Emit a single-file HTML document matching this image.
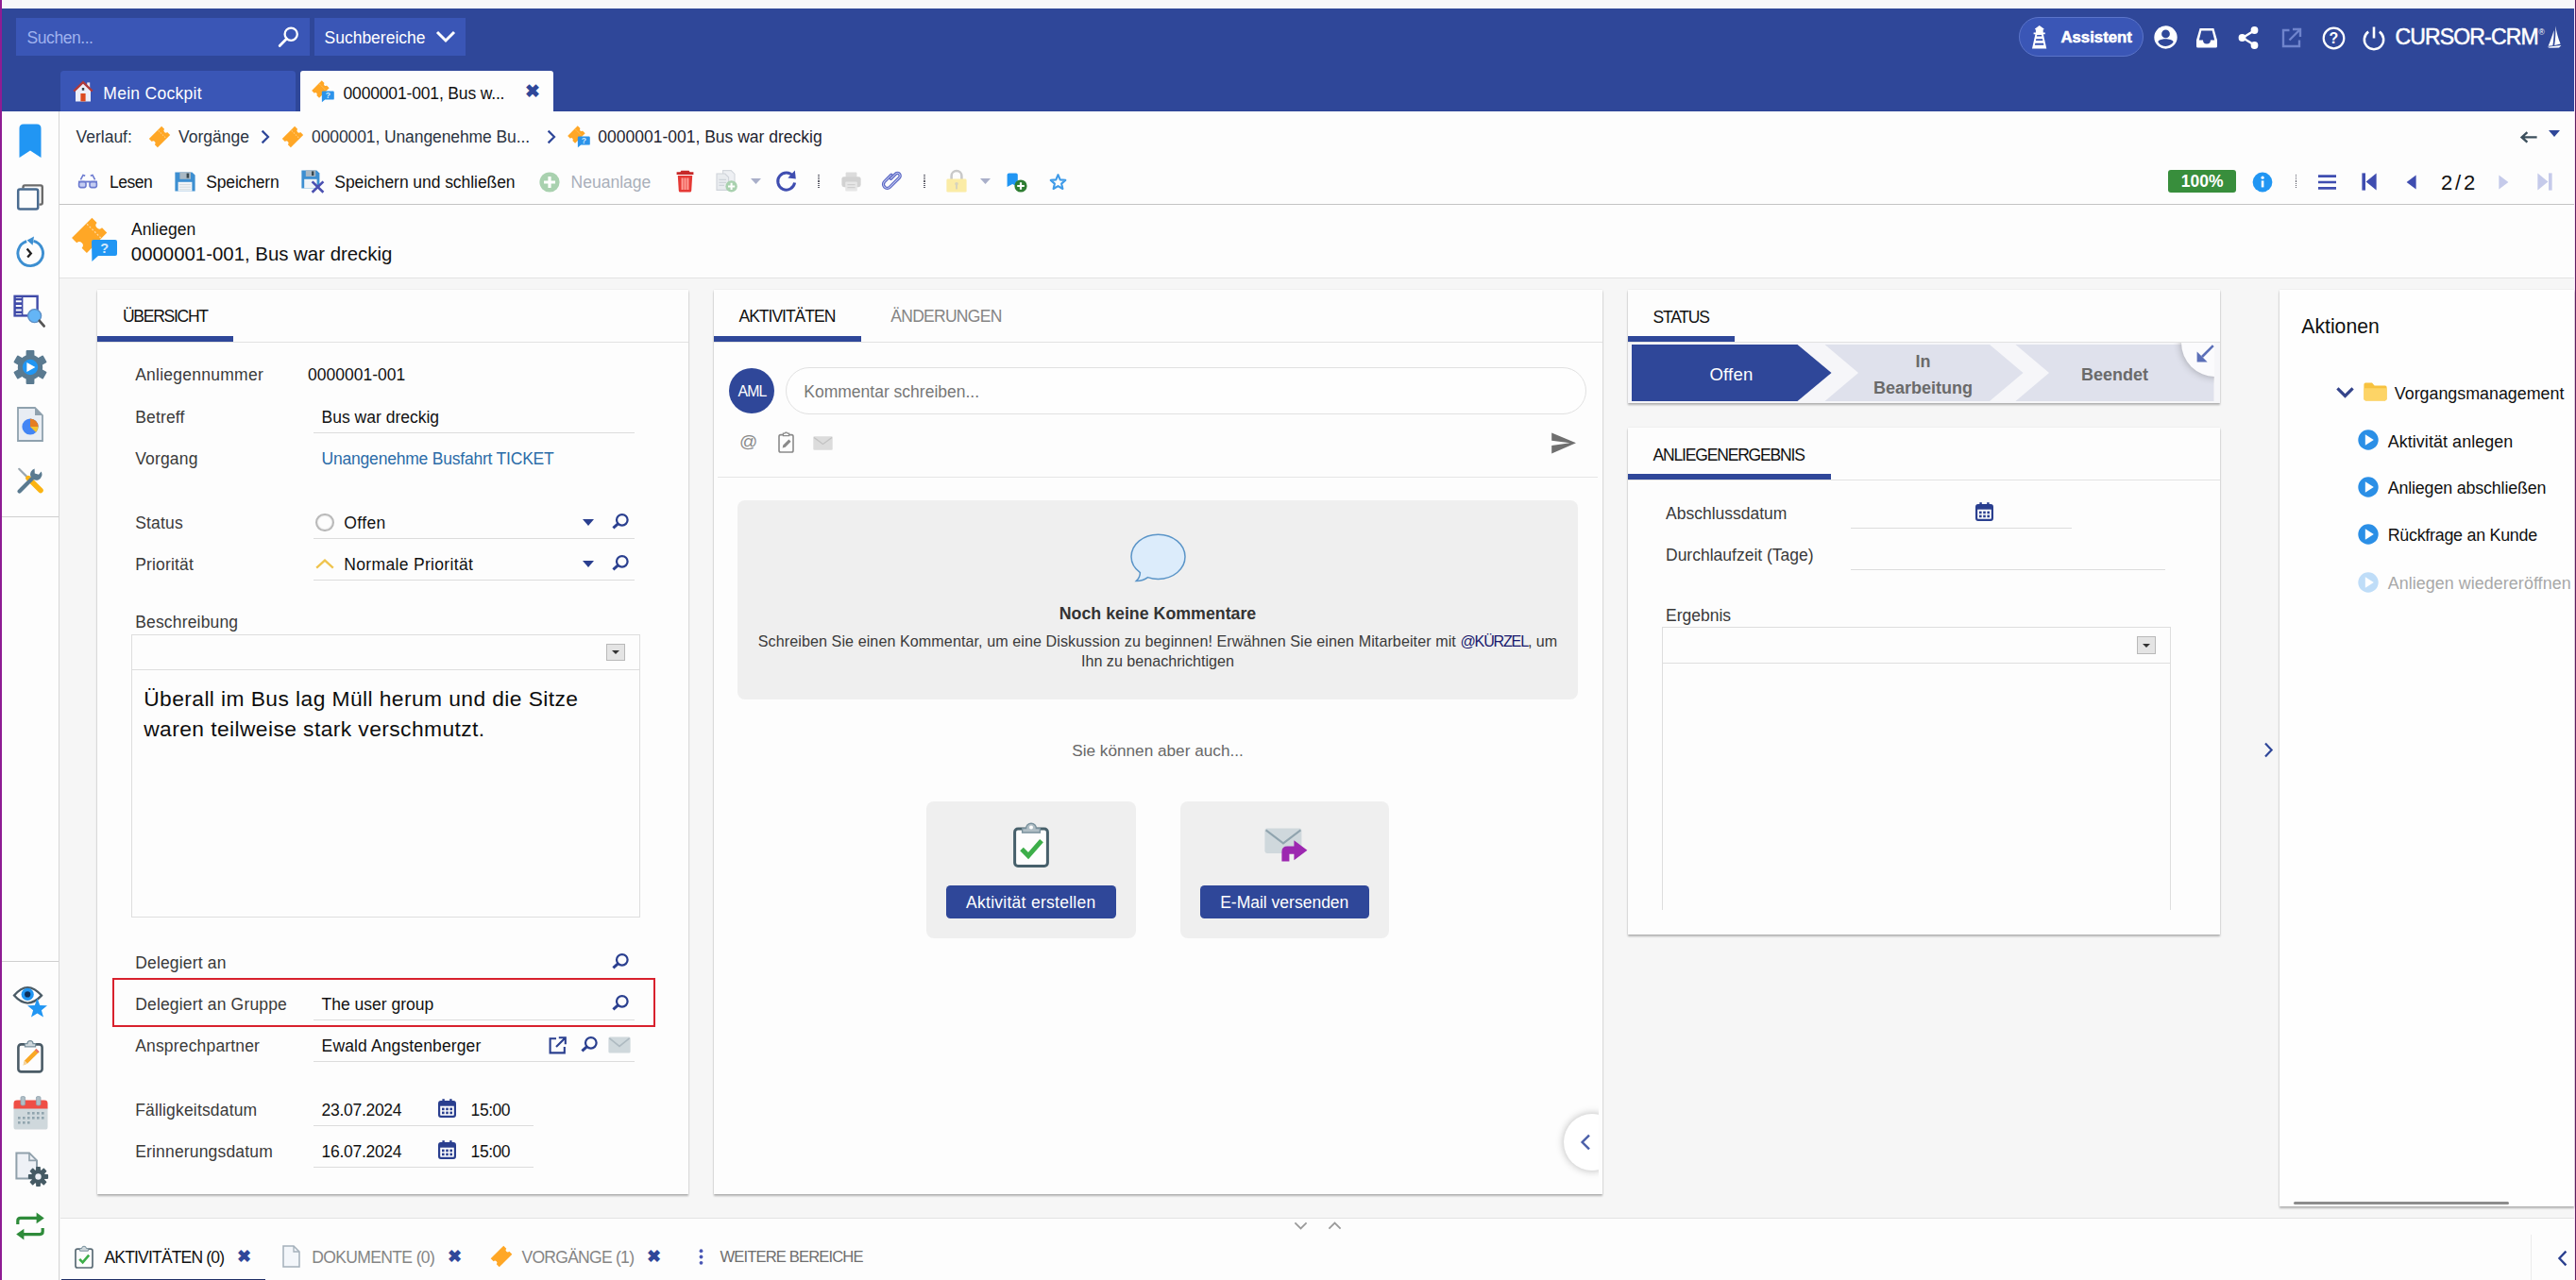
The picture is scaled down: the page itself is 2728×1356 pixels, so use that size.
<!DOCTYPE html>
<html lang="de">
<head>
<meta charset="utf-8">
<title>CURSOR-CRM – Anliegen 0000001-001</title>
<style>
*{box-sizing:border-box;margin:0;padding:0}
html,body{width:2728px;height:1356px;overflow:hidden}
body{position:relative;background:#f6f6f6;font-family:"Liberation Sans",sans-serif;font-size:17.5px;color:#1c1c1c}
.a{position:absolute}
.t{position:absolute;white-space:nowrap;line-height:20px;height:20px}
.lbl{color:#3a3a3a}
.val{color:#111}
.cap{font-size:16.5px}
.ul{position:absolute;height:1px;background:#dcdcdc}
.panel{position:absolute;background:#fdfdfd;box-shadow:0 1.5px 2px rgba(0,0,0,.27),0 0 1.2px rgba(0,0,0,.13)}
.tabline{position:absolute;height:1px;background:#e2e2e2}
.tabul{position:absolute;height:6px;background:#2f4799}
svg{position:absolute;overflow:visible}
.hd{background:#2f4799}
</style>
</head>
<body>
<!-- window chrome edges -->
<div class="a" style="left:0;top:0;width:2728px;height:9px;background:#f7f7f9"></div>

<!-- ================= HEADER ================= -->
<div class="a hd" id="header" style="left:0;top:9px;width:2725.8px;height:109px"></div>
<div class="a" style="left:17px;top:19px;width:311px;height:40px;background:#3a56b6"></div>
<div class="t" style="left:28.6px;top:30.3px;color:#9fb2ee;letter-spacing:-.45px">Suchen...</div>
<svg style="left:294px;top:27px" width="24" height="24" viewBox="0 0 24 24"><circle cx="14.2" cy="9.2" r="6.6" fill="none" stroke="#fff" stroke-width="2.3"/><path d="M9.6 14 L2.2 21.6" stroke="#fff" stroke-width="2.8" stroke-linecap="round"/></svg>
<div class="a" style="left:333px;top:19px;width:160px;height:40px;background:#3a56b6"></div>
<div class="t" style="left:343.5px;top:30px;color:#fff">Suchbereiche</div>
<svg style="left:461px;top:32px" width="22" height="14" viewBox="0 0 22 14"><path d="M2 2 L11 11 L20 2" fill="none" stroke="#fff" stroke-width="3"/></svg>

<!-- main tabs -->
<div class="a" style="left:64px;top:75.3px;width:249px;height:42.7px;background:#3a56b6;border-radius:3.5px 3.5px 0 0"></div>
<div class="t" style="left:109.3px;top:88.8px;color:#fff;letter-spacing:.29px">Mein Cockpit</div>
<div class="a" style="left:318px;top:74.5px;width:267.7px;height:44px;background:#fdfdfd;border-radius:3px 3px 0 0"></div>
<div class="t val" style="left:363.5px;top:88.8px;letter-spacing:-.16px">0000001-001, Bus w...</div>
<div class="t" style="left:555.5px;top:87.2px;color:#2f4799;font-weight:700;font-size:19px">✖</div>
<!-- home icon -->
<svg style="left:77px;top:84.5px" width="22" height="23" viewBox="0 0 22 23"><rect x="15.2" y="2.4" width="3" height="5.6" fill="#e9e4ee"/><path d="M3 10.4 L11 2.8 L19 10.4 V22.4 H3 Z" fill="#eceef8"/><path d="M1.2 11.6 L11 2.2 L20.8 11.6" fill="none" stroke="#b03a3a" stroke-width="2.3" stroke-linejoin="miter"/><rect x="8.4" y="14" width="5.2" height="8.4" fill="#dc4a1f"/><rect x="9.8" y="8" width="2.4" height="2.8" fill="#37474f"/></svg>
<!-- ticket+question icon (tab) -->
<svg style="left:330.3px;top:83.6px" width="26" height="26" viewBox="0 0 26 26"><g transform="rotate(-45 9.4 10.6)"><path d="M1.9 5 H16.9 V8.9 A1.7 1.7 0 0 0 16.9 12.3 V16.2 H1.9 V12.3 A1.7 1.7 0 0 0 1.9 8.9 Z" fill="#ffa726"/><path d="M12.6 5.6 V15.6" stroke="#ffc976" stroke-width=".9" stroke-dasharray="1.4 1.2"/></g><path d="M12 12.6 H22.6 Q23.8 12.6 23.8 13.8 V20.4 Q23.8 21.6 22.6 21.6 H14.2 L10.9 24.2 L10.8 13.8 Q10.8 12.6 12 12.6 Z" fill="#2b93ea"/><text x="17.4" y="20.2" font-size="8.6" font-weight="700" fill="#cfe8fd" text-anchor="middle" font-family="Liberation Sans, sans-serif">?</text></svg>

<!-- header right -->
<div class="a" style="left:2138px;top:17.5px;width:132px;height:42.5px;border-radius:22px;background:#3a56b6;border:1px solid #5b74c9"></div>
<svg style="left:2152.2px;top:26.6px" width="16" height="25" viewBox="0 0 16 25"><path d="M7.7 0 L12.6 3.6 V4.2 H11.7 V7.5 H13.8 V9.3 H11.9 L15.3 24.4 H0 L3.4 9.3 H1.6 V7.5 H3.9 V4.2 H3 V3.6 Z" fill="#fff"/><path d="M5.3 9.9 H10 L10.4 11.6 H4.9 Z M4.3 14.3 H11 L11.4 16.1 H3.9 Z M3.3 18.8 H12 L12.4 20.7 H2.9 Z" fill="#3853b2"/></svg>
<div class="t" style="left:2182.4px;top:30.2px;color:#fff;font-weight:700;font-size:16.8px;-webkit-text-stroke:.55px #fff">Assistent</div>
<!-- user -->
<svg style="left:2280.5px;top:27px" width="25" height="25" viewBox="0 0 24 24"><path d="M12 0.3 A11.7 11.7 0 1 0 12 23.7 A11.7 11.7 0 1 0 12 0.3 Z M12 4.4 A4.2 4.2 0 1 1 12 12.8 A4.2 4.2 0 1 1 12 4.4 Z M12 21 C8.6 21 5.7 19.3 4.2 16.9 C4.3 14.4 9.4 13.6 12 13.6 C14.6 13.6 19.7 14.4 19.8 16.9 C18.3 19.3 15.4 21 12 21 Z" fill="#fff" fill-rule="evenodd"/></svg>
<!-- inbox -->
<svg style="left:2325px;top:29px" width="24" height="22" viewBox="0 0 24 22"><path d="M4.6 1 H19.4 L23 13.5 V20 A1.6 1.6 0 0 1 21.4 21.6 H2.6 A1.6 1.6 0 0 1 1 20 V13.5 Z M6.3 3.4 L3.8 13.4 H8 A4 4 0 0 0 16 13.4 H20.2 L17.7 3.4 Z" fill="#fff" fill-rule="evenodd"/></svg>
<!-- share -->
<svg style="left:2369px;top:27px" width="24" height="26" viewBox="0 0 24 26"><path d="M6 13 L18 5.5 M6 13 L18 20.5" stroke="#fff" stroke-width="2.4"/><circle cx="5.5" cy="13" r="3.9" fill="#fff"/><circle cx="18.5" cy="5" r="3.9" fill="#fff"/><circle cx="18.5" cy="21" r="3.9" fill="#fff"/></svg>
<!-- external dim -->
<svg style="left:2415px;top:28.5px" width="23" height="23" viewBox="0 0 23 23"><path d="M9.5 3 H3 V20 H20 V13.5" fill="none" stroke="#6f84cc" stroke-width="2.4"/><path d="M13 2 H21 V10 M21 2 L9.5 13.5" fill="none" stroke="#6f84cc" stroke-width="2.4"/></svg>
<!-- help -->
<svg style="left:2458.5px;top:27.5px" width="25" height="25" viewBox="0 0 25 25"><circle cx="12.5" cy="12.5" r="10.8" fill="none" stroke="#fff" stroke-width="2.2"/><text x="12.5" y="18.2" font-size="16" font-weight="700" fill="#fff" text-anchor="middle" font-family="Liberation Sans, sans-serif">?</text></svg>
<!-- power -->
<svg style="left:2501px;top:26.5px" width="26" height="27" viewBox="0 0 26 27"><path d="M7.2 6.6 A10.2 10.2 0 1 0 18.8 6.6" fill="none" stroke="#fff" stroke-width="2.5"/><path d="M13 1.5 V13.5" stroke="#fff" stroke-width="2.6"/></svg>
<div class="t" style="left:2536.5px;top:29.4px;color:#fff;font-size:23px;letter-spacing:-0.85px;-webkit-text-stroke:0.5px #fff">CURSOR-CRM</div>
<div class="t" style="left:2688.6px;top:23.6px;color:#fff;font-size:8.5px">®</div>
<svg style="left:2697px;top:27px" width="16" height="24" viewBox="0 0 16 24"><path d="M9.2 0.5 C10.5 7 12.2 14 14.6 19.6 L8.2 21 C9.3 14 9.6 7 9.2 0.5 Z M7.6 5 C7.8 10 7.2 16 6.4 21.2 L1.6 21.8 C4 16 6.2 10 7.6 5 Z M0.6 22.8 L15.4 21 L13 23.4 L3 23.8 Z" fill="#fff"/></svg>

<!-- ================= SIDEBAR ================= -->
<div class="a" style="left:0;top:118px;width:63px;height:1238px;background:#fdfdfd;border-right:1px solid #d6d6d6"></div>
<div class="a" style="left:0;top:547px;width:62px;height:1px;background:#cfcfcf"></div>
<div class="a" style="left:0;top:1018px;width:62px;height:1px;background:#cfcfcf"></div>
<!-- content white bg top (breadcrumb/toolbar/title) -->
<div class="a" style="left:63px;top:118px;width:2663px;height:176px;background:#fdfdfd"></div>
<div class="a" style="left:63px;top:216px;width:2663px;height:1px;background:#c4c4c4"></div>
<div class="a" style="left:63px;top:294px;width:2663px;height:1px;background:#e3e3e3"></div>
<!-- window left/right edge -->
<div class="a" style="left:0;top:0;width:2px;height:1356px;background:#8e1c93"></div>
<div class="a" style="left:2725.8px;top:0;width:1.3px;height:1356px;background:#fbe6f6"></div>
<div class="a" style="left:2727px;top:0;width:1px;height:1356px;background:#5e2160"></div>
<!-- sidebar icons -->
<svg style="left:20px;top:130.5px" width="24" height="37" viewBox="0 0 24 37"><path d="M0.5 5 Q0.5 0.5 5 0.5 H19 Q23.5 0.5 23.5 5 V36 L12 28.5 L0.5 36 Z" fill="#2196f3"/></svg>
<svg style="left:17px;top:195px" width="30" height="28" viewBox="0 0 30 28"><path d="M7.5 4.5 V3.2 Q7.5 1.4 9.3 1.4 H26 Q27.8 1.4 27.8 3.2 V19.8 Q27.8 21.6 26 21.6 H24.5" fill="none" stroke="#6b6b6b" stroke-width="2.4"/><rect x="2.2" y="5.6" width="21" height="21" rx="2" fill="none" stroke="#4a6b8f" stroke-width="2.5"/></svg>
<svg style="left:15px;top:250px" width="34" height="36" viewBox="0 0 34 36"><path d="M13.2 5.6 A13.3 13.3 0 1 0 20.5 5.4" fill="none" stroke="#3d8fd1" stroke-width="2.9"/><path d="M21 0.6 L13.6 4.6 L19.6 9.8 Z" fill="#3d8fd1"/><path d="M13.6 13.6 L17.8 18.4 L14.2 22.6" fill="none" stroke="#222" stroke-width="2.3"/></svg>
<svg style="left:14px;top:312px" width="34" height="36" viewBox="0 0 34 36"><rect x="1.6" y="1.8" width="24" height="20.6" fill="#fdfdfd" stroke="#3f4aa8" stroke-width="2.4"/><path d="M1.6 5 H9.4 M1.6 9.6 H9.4 M1.6 14.2 H9.4 M1.6 18.8 H9.4" stroke="#3f4aa8" stroke-width="2.6"/><path d="M9.6 2 V22" stroke="#3f4aa8" stroke-width="1.6"/><circle cx="22.6" cy="22.6" r="7" fill="#64b5f6" stroke="#5c8fc6" stroke-width="1.4"/><path d="M27.8 27.8 L32.6 33.4" stroke="#555" stroke-width="2.8" stroke-linecap="round"/></svg>
<svg style="left:14px;top:371px" width="36" height="36" viewBox="-18 -18 36 36"><g fill="#5a7a90"><circle r="13.2"/><g id="gt"><rect x="-4.4" y="-18" width="8.8" height="9" rx="1"/></g><use href="#gt" transform="rotate(60)"/><use href="#gt" transform="rotate(120)"/><use href="#gt" transform="rotate(180)"/><use href="#gt" transform="rotate(240)"/><use href="#gt" transform="rotate(300)"/></g><circle r="8.2" fill="#2196f3"/><path d="M-3.6 -5 L5.4 0 L-3.6 5 Z" fill="#fff"/></svg>
<svg style="left:18px;top:430.5px" width="28" height="37" viewBox="0 0 28 37"><path d="M1 1 H19 L27 9 V36 H1 Z" fill="#e8edf3" stroke="#8fa1ae" stroke-width="1.8"/><path d="M19 1 V9 H27 Z" fill="#8fa1ae"/><circle cx="14" cy="21" r="8.6" fill="#4285f4"/><path d="M14 21 V12.4 A8.6 8.6 0 0 1 22.6 21 Z" fill="#e67e22"/><path d="M14 21 H22.6 A8.6 8.6 0 0 1 20.1 27.1 Z" fill="#f4c430"/></svg>
<svg style="left:18px;top:495px" width="28" height="28" viewBox="0 0 28 28"><path d="M2.2 1.8 L13 12.6" stroke="#9aa7b0" stroke-width="2.2" stroke-linecap="round"/><path d="M12 11.6 L25 24.6" stroke="#fbb413" stroke-width="5.6" stroke-linecap="round"/><path d="M2.6 25.4 L15.5 12.5" stroke="#5a7a90" stroke-width="4.2" stroke-linecap="round"/><path d="M25.6 4.4 A6.2 6.2 0 1 1 18.6 1.6 L18.8 6.6 L23 7.8 Z" fill="#5a7a90"/></svg>
<!-- lower sidebar icons -->
<svg style="left:13.5px;top:1041.5px" width="37" height="36" viewBox="0 0 37 36"><path d="M1 12.6 Q15 -4.5 30 12.6 Q15 28.5 1 12.6 Z" fill="#fff" stroke="#4a5b66" stroke-width="2.3"/><circle cx="15.2" cy="11.4" r="6.6" fill="#2196f3"/><circle cx="15.2" cy="11.4" r="3.1" fill="#0d2f5a"/><path d="M25.5 15.6 L28.2 23 L36 23.3 L29.9 28.2 L32 35.6 L25.5 31.4 L19 35.6 L21.1 28.2 L15 23.3 L22.8 23 Z" fill="#2196f3"/></svg>
<svg style="left:18px;top:1100.5px" width="28" height="36" viewBox="0 0 28 36"><rect x="1.4" y="5.4" width="25.2" height="29" rx="3" fill="#fdfdfd" stroke="#4a5b66" stroke-width="2.6"/><path d="M8.4 7.8 V4.6 H11 A3 3 0 0 1 17 4.6 H19.6 V7.8 Z" fill="#cfd8dc" stroke="#78909c" stroke-width="1.2"/><path d="M6.6 27.4 L8 22.4 L20.4 10 L23.6 13.2 L11.2 25.6 Z" fill="#f9a825"/><path d="M6.6 27.4 L8 22.4 L11.2 25.6 Z" fill="#f3d6a4"/><path d="M19 11.4 L20.4 10 L23.6 13.2 L22.2 14.6 Z" fill="#e57373"/></svg>
<svg style="left:13.5px;top:1160.5px" width="37" height="36" viewBox="0 0 37 36"><rect x="0.5" y="11" width="36" height="24.5" rx="2.6" fill="#cfd8dc"/><path d="M0.5 13.4 V8 Q0.5 4.6 4 4.6 H33 Q36.5 4.6 36.5 8 V13.4 Z" fill="#ef4e45"/><rect x="8" y="0.6" width="4.6" height="9.4" rx="1.4" fill="#b0bec5" stroke="#8fa1ae" stroke-width=".8"/><rect x="24.4" y="0.6" width="4.6" height="9.4" rx="1.4" fill="#b0bec5" stroke="#8fa1ae" stroke-width=".8"/><g fill="#90a4ae"><rect x="15" y="17" width="2.6" height="2.6"/><rect x="20" y="17" width="2.6" height="2.6"/><rect x="25" y="17" width="2.6" height="2.6"/><rect x="30" y="17" width="2.6" height="2.6"/><rect x="5" y="22" width="2.6" height="2.6"/><rect x="10" y="22" width="2.6" height="2.6"/><rect x="15" y="22" width="2.6" height="2.6"/><rect x="20" y="22" width="2.6" height="2.6"/><rect x="25" y="22" width="2.6" height="2.6"/><rect x="30" y="22" width="2.6" height="2.6"/><rect x="5" y="27" width="2.6" height="2.6"/><rect x="10" y="27" width="2.6" height="2.6"/><rect x="15" y="27" width="2.6" height="2.6"/></g></svg>
<svg style="left:15.5px;top:1220px" width="36" height="38" viewBox="0 0 36 38"><path d="M1.4 1.4 H15 L23 9.4 V28.6 H1.4 Z" fill="#eef1f6" stroke="#90a0ab" stroke-width="2"/><path d="M15 1.4 V9.4 H23" fill="none" stroke="#90a0ab" stroke-width="1.6"/><g transform="translate(24.5 26.5)" fill="#455a64"><circle r="7.4"/><g id="g2"><rect x="-2.4" y="-10.6" width="4.8" height="5" rx=".8"/></g><use href="#g2" transform="rotate(45)"/><use href="#g2" transform="rotate(90)"/><use href="#g2" transform="rotate(135)"/><use href="#g2" transform="rotate(180)"/><use href="#g2" transform="rotate(225)"/><use href="#g2" transform="rotate(270)"/><use href="#g2" transform="rotate(315)"/><circle r="3.2" fill="#eef1f6"/></g></svg>
<svg style="left:16px;top:1284px" width="32" height="30" viewBox="0 0 32 30"><path d="M2.8 13 V9.4 Q2.8 6.4 5.8 6.4 H24" fill="none" stroke="#2e8b3a" stroke-width="3.2"/><path d="M22.6 0.6 L30.8 6.4 L22.6 12.2 Z" fill="#2e8b3a"/><path d="M29.2 17 V20.6 Q29.2 23.6 26.2 23.6 H8" fill="none" stroke="#2e8b3a" stroke-width="3.2"/><path d="M9.4 17.8 L1.2 23.6 L9.4 29.4 Z" fill="#2e8b3a"/></svg>
<!-- ================= BREADCRUMB ================= -->
<div class="t" style="left:80.5px;top:134.8px;color:#2b3442">Verlauf:</div>
<svg class="tk" style="left:157px;top:132.5px" width="24" height="24" viewBox="0 0 24 24"><g transform="rotate(-45 12 12)"><path d="M2.6 5.6 H21.4 V9.8 A2.2 2.2 0 0 0 21.4 14.2 V18.4 H2.6 V14.2 A2.2 2.2 0 0 0 2.6 9.8 Z" fill="#ffa726"/><path d="M15.8 6.4 V17.6" stroke="#ffcc80" stroke-width="1" stroke-dasharray="1.6 1.4"/></g></svg>
<div class="t" style="left:189px;top:134.8px;color:#2b3442">Vorgänge</div>
<svg style="left:275.5px;top:137px" width="10" height="16" viewBox="0 0 10 16"><path d="M1.6 1.6 L8 8 L1.6 14.4" fill="none" stroke="#2f4799" stroke-width="2.2"/></svg>
<svg style="left:298px;top:132.5px" width="24" height="24" viewBox="0 0 24 24"><g transform="rotate(-45 12 12)"><path d="M2.6 5.6 H21.4 V9.8 A2.2 2.2 0 0 0 21.4 14.2 V18.4 H2.6 V14.2 A2.2 2.2 0 0 0 2.6 9.8 Z" fill="#ffa726"/><path d="M15.8 6.4 V17.6" stroke="#ffcc80" stroke-width="1" stroke-dasharray="1.6 1.4"/></g></svg>
<div class="t" style="left:330px;top:134.8px;color:#2b3442;letter-spacing:-.1px">0000001, Unangenehme Bu...</div>
<svg style="left:578.5px;top:137px" width="10" height="16" viewBox="0 0 10 16"><path d="M1.6 1.6 L8 8 L1.6 14.4" fill="none" stroke="#2f4799" stroke-width="2.2"/></svg>
<svg style="left:601px;top:131.5px" width="26" height="26" viewBox="0 0 26 26"><g transform="rotate(-45 9.4 10.6)"><path d="M1.9 5 H16.9 V8.9 A1.7 1.7 0 0 0 16.9 12.3 V16.2 H1.9 V12.3 A1.7 1.7 0 0 0 1.9 8.9 Z" fill="#ffa726"/><path d="M12.6 5.6 V15.6" stroke="#ffc976" stroke-width=".9" stroke-dasharray="1.4 1.2"/></g><path d="M12 12.6 H22.6 Q23.8 12.6 23.8 13.8 V20.4 Q23.8 21.6 22.6 21.6 H14.2 L10.9 24.2 L10.8 13.8 Q10.8 12.6 12 12.6 Z" fill="#2b93ea"/><text x="17.4" y="20.2" font-size="8.6" font-weight="700" fill="#cfe8fd" text-anchor="middle" font-family="Liberation Sans, sans-serif">?</text></svg>
<div class="t" style="left:633.3px;top:134.8px;color:#1f2430">0000001-001, Bus war dreckig</div>
<!-- back arrow + dropdown -->
<svg style="left:2668px;top:138px" width="20" height="14" viewBox="0 0 20 14"><path d="M18.6 7.4 H4 M8.4 2.2 L2.6 7.4 L8.4 12.6" fill="none" stroke="#3c4f5c" stroke-width="2.4"/></svg>
<svg style="left:2699px;top:138px" width="12" height="7" viewBox="0 0 12 7"><path d="M0 0 H12 L6 7 Z" fill="#2f4799"/></svg>

<!-- ================= TOOLBAR ================= -->
<svg style="left:82px;top:184px" width="22" height="16" viewBox="0 0 22 16"><path d="M3.4 6.4 L6 1.4 L8.2 2.2 M18.6 6.4 L16 1.4 L13.8 2.2" fill="none" stroke="#6c7bd0" stroke-width="1.6"/><path d="M1 7.6 H21 V9.4 H1 Z" fill="#6c7bd0"/><rect x="1.6" y="8.6" width="7.4" height="6" rx="2" fill="#c5cdf2" stroke="#6c7bd0" stroke-width="1.6"/><rect x="13" y="8.6" width="7.4" height="6" rx="2" fill="#c5cdf2" stroke="#6c7bd0" stroke-width="1.6"/></svg>
<div class="t val" style="left:116px;top:183.1px;letter-spacing:-.5px">Lesen</div>
<svg style="left:185px;top:182px" width="22" height="21" viewBox="0 0 22 21"><path d="M0.4 0.4 H18.4 L21.6 3.6 V20.6 H0.4 Z" fill="#3d8fd1"/><rect x="5.4" y="0.4" width="11.6" height="7.4" fill="#a9b8c4"/><rect x="12.6" y="1.6" width="2.6" height="5" fill="#37474f"/><rect x="3.6" y="10.8" width="14.8" height="9.8" fill="#f1f4f7"/><path d="M5 13.6 H17 M5 16.2 H17 M5 18.8 H17" stroke="#cfd8dc" stroke-width=".9"/></svg>
<div class="t val" style="left:218.3px;top:183.1px;letter-spacing:-.18px">Speichern</div>
<svg style="left:318.5px;top:180px" width="25" height="25" viewBox="0 0 25 25"><path d="M0.4 0.4 H16.4 L19.4 3.4 V19.4 H0.4 Z" fill="#3d8fd1"/><rect x="4.8" y="0.4" width="10.4" height="6.6" fill="#a9b8c4"/><rect x="11" y="1.4" width="2.4" height="4.6" fill="#37474f"/><rect x="3.2" y="9.8" width="13.4" height="9.6" fill="#f1f4f7"/><path d="M11.6 12.4 L23.4 23.8 M23.4 12.4 L11.6 23.8" stroke="#4a4fb0" stroke-width="2.6"/></svg>
<div class="t val" style="left:354.3px;top:183.1px;letter-spacing:-.06px">Speichern und schließen</div>
<svg style="left:571px;top:181.5px" width="22" height="22" viewBox="0 0 22 22"><circle cx="11" cy="11" r="10.6" fill="#a9d1af"/><path d="M11 5 V17 M5 11 H17" stroke="#fff" stroke-width="3.2"/></svg>
<div class="t" style="left:604.6px;top:183.1px;color:#a9afba">Neuanlage</div>
<!-- trash -->
<svg style="left:715.5px;top:180px" width="19" height="24" viewBox="0 0 19 24"><path d="M5.4 0.8 H13.6 L14.6 2.2 H18.4 V5 H0.6 V2.2 H4.4 Z" fill="#c62828"/><path d="M1.8 6 H17.2 L16.2 22 Q16.1 23.6 14.6 23.6 H4.4 Q2.9 23.6 2.8 22 Z" fill="#e53935"/><path d="M6.6 8.4 V21 M9.5 8.4 V21 M12.4 8.4 V21" stroke="#ff9e96" stroke-width="2.1"/></svg>
<!-- copy plus (dim) -->
<svg style="left:758px;top:180px" width="24" height="24" viewBox="0 0 24 24"><path d="M7.6 0.6 H16.2 L20 4.4 V17 H7.6 Z" fill="#eef0f3" stroke="#d3d7dc" stroke-width="1.1"/><path d="M1 4 H9.8 L13.6 7.8 V21.4 H1 Z" fill="#e9ecef" stroke="#cfd4da" stroke-width="1.1"/><path d="M3.4 10.4 H11 M3.4 13.4 H11 M3.4 16.4 H9" stroke="#cfd4da" stroke-width="1.2"/><circle cx="16.6" cy="17.4" r="6.2" fill="#a9d1af"/><path d="M16.6 13.8 V21 M13 17.4 H20.2" stroke="#fff" stroke-width="2"/></svg>
<svg style="left:794.5px;top:189px" width="11" height="6" viewBox="0 0 11 6"><path d="M0 0 H11 L5.5 6 Z" fill="#a9afc9"/></svg>
<!-- refresh -->
<svg style="left:821px;top:180px" width="23" height="23" viewBox="0 0 23 23"><path d="M19 6.8 A9 9 0 1 0 20.6 13.6" fill="none" stroke="#3f4db0" stroke-width="3"/><path d="M13.4 8.6 L20.8 0.4 L21.8 9.6 Z" fill="#3f4db0"/></svg>
<div class="a" style="left:866px;top:185px;width:1.7px;height:15px;background:repeating-linear-gradient(to bottom,#5f5f6a 0,#5f5f6a 1.1px,transparent 1.1px,transparent 2.14px)"></div>
<!-- printer dim -->
<svg style="left:890.5px;top:181.5px" width="21" height="21" viewBox="0 0 21 21"><rect x="4.6" y="0.6" width="11.8" height="6" rx="1" fill="#dcdcdc"/><rect x="0.4" y="5.2" width="20.2" height="11" rx="2.4" fill="#d2d2d2"/><rect x="4.2" y="10.6" width="12.6" height="9.8" rx="1" fill="#e6e6e6"/><path d="M6.4 13.6 H14.6 M6.4 16.6 H14.6" stroke="#cfcfcf" stroke-width="1.4"/></svg>
<!-- paperclip -->
<svg style="left:934px;top:182px" width="20" height="20" viewBox="0 0 20 20"><g transform="rotate(45 10 10)"><path d="M6.6 7.4 V-1.6 A3.6 3.6 0 0 1 13.8 -1.6 V16.4 A5.2 5.2 0 0 1 3.4 16.4 V3.4" fill="none" stroke="#5a67c4" stroke-width="4.2" stroke-linecap="round" transform="scale(.78) translate(3.2 3.4)"/><path d="M6.6 7.4 V-1.6 A3.6 3.6 0 0 1 13.8 -1.6 V16.4 A5.2 5.2 0 0 1 3.4 16.4 V3.4" fill="none" stroke="#c5cbf0" stroke-width="1.3" stroke-linecap="round" transform="scale(.78) translate(3.2 3.4)"/></g></svg>
<div class="a" style="left:978px;top:185px;width:1.7px;height:15px;background:repeating-linear-gradient(to bottom,#5f5f6a 0,#5f5f6a 1.1px,transparent 1.1px,transparent 2.14px)"></div>
<!-- lock dim -->
<svg style="left:1002px;top:180px" width="22" height="24" viewBox="0 0 22 24"><path d="M5.6 10.6 V6.4 A5.4 5.4 0 0 1 16.4 6.4 V10.6" fill="none" stroke="#c9c9c9" stroke-width="2.6"/><rect x="0.4" y="9.6" width="21.2" height="14" rx="1.4" fill="#fbeca6"/><circle cx="11" cy="14.8" r="1.8" fill="#d7d3bd"/><rect x="10" y="15" width="2" height="5.4" fill="#d7d3bd"/></svg>
<svg style="left:1037.5px;top:189px" width="11" height="6" viewBox="0 0 11 6"><path d="M0 0 H11 L5.5 6 Z" fill="#a9afc9"/></svg>
<!-- bookmark plus -->
<svg style="left:1065.5px;top:183px" width="22" height="21" viewBox="0 0 22 21"><path d="M0.6 2.2 Q0.6 0.4 2.4 0.4 H10 Q11.8 0.4 11.8 2.2 V15 L6.2 12 L0.6 15 Z" fill="#2196f3"/><circle cx="15" cy="14" r="6.6" fill="#2e7d32"/><path d="M15 10.2 V17.8 M11.2 14 H18.8" stroke="#fff" stroke-width="2.2"/></svg>
<!-- star -->
<svg style="left:1109.5px;top:182px" width="21" height="21" viewBox="0 0 21 21"><path d="M10.5 3.2 L12.7 8.4 L18.3 8.9 L14.1 12.6 L15.4 18 L10.5 15.1 L5.6 18 L6.9 12.6 L2.7 8.9 L8.3 8.4 Z" fill="none" stroke="#3f9be8" stroke-width="2.1" stroke-linejoin="round"/></svg>

<!-- toolbar right -->
<div class="a" style="left:2296px;top:180px;width:72px;height:23.5px;background:#388e3c;border-radius:3px"></div>
<div class="t" style="left:2309.7px;top:182px;color:#fff;font-weight:700">100%</div>
<svg style="left:2385px;top:181.5px" width="22" height="22" viewBox="0 0 22 22"><circle cx="11" cy="11" r="10.4" fill="#2196f3"/><rect x="9.8" y="9.4" width="2.6" height="7" fill="#fff"/><circle cx="11.1" cy="6.2" r="1.6" fill="#fff"/></svg>
<div class="a" style="left:2430.5px;top:185px;width:1.7px;height:15px;background:repeating-linear-gradient(to bottom,#5f5f6a 0,#5f5f6a 1.1px,transparent 1.1px,transparent 2.14px)"></div>
<svg style="left:2454.5px;top:184.5px" width="19" height="16" viewBox="0 0 19 16"><path d="M0 1.6 H19 M0 8 H19 M0 14.4 H19" stroke="#3f4db0" stroke-width="2.6"/></svg>
<svg style="left:2501px;top:183px" width="16" height="19" viewBox="0 0 16 19"><rect x="0.4" y="0.4" width="3.6" height="18.2" fill="#3f4db0"/><path d="M15.6 0.6 V18.4 L4.6 9.5 Z" fill="#3f4db0"/></svg>
<svg style="left:2547.5px;top:184.5px" width="11" height="16" viewBox="0 0 11 16"><path d="M10.6 0.4 V15.6 L0.6 8 Z" fill="#3f4db0"/></svg>
<div class="t val" style="left:2585px;top:184px;font-size:22px;word-spacing:-3.3px">2 / 2</div>
<svg style="left:2646px;top:184.5px" width="11" height="16" viewBox="0 0 11 16"><path d="M0.4 0.4 V15.6 L10.4 8 Z" fill="#c5caea"/></svg>
<svg style="left:2687px;top:183px" width="16" height="19" viewBox="0 0 16 19"><rect x="12" y="0.4" width="3.6" height="18.2" fill="#c5caea"/><path d="M0.4 0.6 V18.4 L11.4 9.5 Z" fill="#c5caea"/></svg>

<!-- ================= TITLE ================= -->
<svg style="left:76px;top:229.5px" width="50" height="48" viewBox="0 0 50 48"><g transform="rotate(-45 19 19)"><path d="M3.4 7.8 H33.6 V15.2 A3.8 3.8 0 0 0 33.6 22.8 V30.2 H3.4 V22.8 A3.8 3.8 0 0 0 3.4 15.2 Z" fill="#ffa726"/><path d="M25.2 8.6 V29.4" stroke="#ffd699" stroke-width="1.3" stroke-dasharray="2 1.8"/></g><path d="M23 24 H46 Q48 24 48 26 V39 Q48 41 46 41 H28 L21.4 47 L21 26 Q21 24 23 24 Z" fill="#2196f3"/><text x="34.6" y="38.4" font-size="14.5" font-weight="700" fill="#d4e9fc" text-anchor="middle" font-family="Liberation Sans, sans-serif">?</text></svg>
<div class="t val" style="left:139px;top:233px">Anliegen</div>
<div class="t val" style="left:138.8px;top:259px;font-size:20.4px">0000001-001, Bus war dreckig</div>

<!-- ================= LEFT PANEL: ÜBERSICHT ================= -->
<div class="panel" style="left:103px;top:307px;width:626px;height:957.5px"></div>
<div class="tabline" style="left:103px;top:362px;width:626px"></div>
<div class="tabul" style="left:103px;top:356px;width:144px"></div>
<div class="t val" style="left:130px;top:325.2px;letter-spacing:-1.27px">ÜBERSICHT</div>

<div class="t lbl" style="left:143.2px;top:387.3px;letter-spacing:.25px">Anliegennummer</div>
<div class="t val" style="left:326px;top:387.3px">0000001-001</div>
<div class="t lbl" style="left:143.2px;top:431.5px;letter-spacing:.17px">Betreff</div>
<div class="t val" style="left:340.6px;top:431.5px">Bus war dreckig</div>
<div class="ul" style="left:332px;top:458px;width:339.5px"></div>
<div class="t lbl" style="left:143.2px;top:475.9px;letter-spacing:.17px">Vorgang</div>
<div class="t" style="left:340.6px;top:475.9px;color:#2b6ca8;letter-spacing:-.21px">Unangenehme Busfahrt TICKET</div>

<div class="t lbl" style="left:143.2px;top:543.5px;letter-spacing:.17px">Status</div>
<div class="a" style="left:334px;top:543.5px;width:19.5px;height:19.5px;border-radius:50%;border:2px solid #b9b9b9;background:#fdfdfd;box-shadow:inset 0 0 1.5px rgba(0,0,0,.25)"></div>
<div class="t val" style="left:364.3px;top:543.5px;letter-spacing:.38px">Offen</div>
<svg style="left:616.5px;top:549.5px" width="12" height="7" viewBox="0 0 12 7"><path d="M0 0 H12 L6 7 Z" fill="#2a3f8f"/></svg>
<svg class="mg" style="left:646.5px;top:543px" width="20" height="20" viewBox="0 0 20 20"><circle cx="11.8" cy="7.8" r="5.8" fill="none" stroke="#2a3f8f" stroke-width="2.25"/><path d="M7.7 11.7 L2.4 16.4" stroke="#2a3f8f" stroke-width="3" stroke-linecap="butt"/></svg>
<div class="ul" style="left:332px;top:570px;width:339.5px"></div>

<div class="t lbl" style="left:143.2px;top:587.5px;letter-spacing:.17px">Priorität</div>
<svg style="left:333.5px;top:591.5px" width="20" height="11" viewBox="0 0 20 11"><path d="M1.2 9.6 L10 1.6 L18.8 9.6" fill="none" stroke="#efc44e" stroke-width="2.3"/></svg>
<div class="t val" style="left:364.3px;top:587.5px;letter-spacing:.33px">Normale Priorität</div>
<svg style="left:616.5px;top:593.5px" width="12" height="7" viewBox="0 0 12 7"><path d="M0 0 H12 L6 7 Z" fill="#2a3f8f"/></svg>
<svg style="left:646.5px;top:587px" width="20" height="20" viewBox="0 0 20 20"><circle cx="11.8" cy="7.8" r="5.8" fill="none" stroke="#2a3f8f" stroke-width="2.25"/><path d="M7.7 11.7 L2.4 16.4" stroke="#2a3f8f" stroke-width="3" stroke-linecap="butt"/></svg>
<div class="ul" style="left:332px;top:614px;width:339.5px"></div>

<div class="t lbl" style="left:143.2px;top:648.5px;letter-spacing:.17px">Beschreibung</div>
<div class="a" style="left:139px;top:672px;width:539px;height:299.5px;border:1px solid #dedede;background:#fdfdfd"></div>
<div class="a" style="left:139px;top:709px;width:539px;height:1px;background:#dedede"></div>
<div class="a" style="left:642px;top:682px;width:20px;height:18px;background:#e4e4e4;border:1px solid #b9b9b9"></div>
<svg style="left:648px;top:689px" width="8" height="4" viewBox="0 0 8 4"><path d="M0 0 H8 L4 4 Z" fill="#333"/></svg>
<div class="a val" id="desc" style="left:152.2px;top:724px;width:520px;font-size:22.8px;line-height:32.3px;letter-spacing:.42px;color:#0d0d0d">Überall im Bus lag Müll herum und die Sitze<br>waren teilweise stark verschmutzt.</div>

<div class="t lbl" style="left:143.2px;top:1009.5px;letter-spacing:.17px">Delegiert an</div>
<svg style="left:646.5px;top:1008.5px" width="20" height="20" viewBox="0 0 20 20"><circle cx="11.8" cy="7.8" r="5.8" fill="none" stroke="#2a3f8f" stroke-width="2.25"/><path d="M7.7 11.7 L2.4 16.4" stroke="#2a3f8f" stroke-width="3" stroke-linecap="butt"/></svg>
<div class="a" style="left:119px;top:1036.3px;width:575px;height:52px;border:2.7px solid #d8212d"></div>
<div class="t lbl" style="left:143.2px;top:1053.6px;letter-spacing:.17px">Delegiert an Gruppe</div>
<div class="t val" style="left:340.6px;top:1053.6px">The user group</div>
<svg style="left:646.5px;top:1052.5px" width="20" height="20" viewBox="0 0 20 20"><circle cx="11.8" cy="7.8" r="5.8" fill="none" stroke="#2a3f8f" stroke-width="2.25"/><path d="M7.7 11.7 L2.4 16.4" stroke="#2a3f8f" stroke-width="3" stroke-linecap="butt"/></svg>
<div class="ul" style="left:332px;top:1080px;width:339.5px"></div>
<div class="t lbl" style="left:143.2px;top:1097.6px;letter-spacing:.17px">Ansprechpartner</div>
<div class="t val" style="left:340.6px;top:1097.6px;letter-spacing:.13px">Ewald Angstenberger</div>
<svg style="left:580.5px;top:1097.5px" width="19" height="19" viewBox="0 0 19 19"><path d="M8 2.2 H1.6 V17.4 H16.8 V11" fill="none" stroke="#2a3f8f" stroke-width="2.1"/><path d="M10.8 1.2 H17.8 V8.2 M17.6 1.4 L8 11" fill="none" stroke="#2a3f8f" stroke-width="2.1"/></svg>
<svg style="left:613.5px;top:1097px" width="20" height="20" viewBox="0 0 20 20"><circle cx="11.8" cy="7.8" r="5.8" fill="none" stroke="#2a3f8f" stroke-width="2.25"/><path d="M7.7 11.7 L2.4 16.4" stroke="#2a3f8f" stroke-width="3" stroke-linecap="butt"/></svg>
<svg style="left:644px;top:1098px" width="24" height="18" viewBox="0 0 24 18"><rect x="0.4" y="0.4" width="23.2" height="17.2" rx="1.6" fill="#cfd8dc"/><path d="M1.4 1.8 L12 10.4 L22.6 1.8" fill="none" stroke="#aebac1" stroke-width="1.6"/></svg>
<div class="ul" style="left:332px;top:1124px;width:339.5px"></div>

<div class="t lbl" style="left:143.2px;top:1165.6px;letter-spacing:.17px">Fälligkeitsdatum</div>
<div class="t val" style="left:340.6px;top:1165.6px;letter-spacing:-.3px">23.07.2024</div>
<svg class="cal" style="left:463.5px;top:1164px" width="19" height="20" viewBox="0 0 19 20"><rect x="1.1" y="3.1" width="16.8" height="15.8" rx="1.8" fill="none" stroke="#2a3f8f" stroke-width="2.2"/><rect x="1.1" y="3.1" width="16.8" height="4.6" fill="#2a3f8f"/><rect x="4.4" y="0.2" width="2.4" height="4.4" fill="#2a3f8f"/><rect x="12.2" y="0.2" width="2.4" height="4.4" fill="#2a3f8f"/><g fill="#2a3f8f"><rect x="4" y="9.6" width="2.6" height="2.6"/><rect x="8.2" y="9.6" width="2.6" height="2.6"/><rect x="12.4" y="9.6" width="2.6" height="2.6"/><rect x="4" y="13.6" width="2.6" height="2.6"/><rect x="8.2" y="13.6" width="2.6" height="2.6"/><rect x="12.4" y="13.6" width="2.6" height="2.6"/></g></svg>
<div class="t val" style="left:498.6px;top:1165.6px;letter-spacing:-.45px">15:00</div>
<div class="ul" style="left:332px;top:1192px;width:232.5px"></div>
<div class="t lbl" style="left:143.2px;top:1209.6px;letter-spacing:.17px">Erinnerungsdatum</div>
<div class="t val" style="left:340.6px;top:1209.6px;letter-spacing:-.3px">16.07.2024</div>
<svg style="left:463.5px;top:1208px" width="19" height="20" viewBox="0 0 19 20"><rect x="1.1" y="3.1" width="16.8" height="15.8" rx="1.8" fill="none" stroke="#2a3f8f" stroke-width="2.2"/><rect x="1.1" y="3.1" width="16.8" height="4.6" fill="#2a3f8f"/><rect x="4.4" y="0.2" width="2.4" height="4.4" fill="#2a3f8f"/><rect x="12.2" y="0.2" width="2.4" height="4.4" fill="#2a3f8f"/><g fill="#2a3f8f"><rect x="4" y="9.6" width="2.6" height="2.6"/><rect x="8.2" y="9.6" width="2.6" height="2.6"/><rect x="12.4" y="9.6" width="2.6" height="2.6"/><rect x="4" y="13.6" width="2.6" height="2.6"/><rect x="8.2" y="13.6" width="2.6" height="2.6"/><rect x="12.4" y="13.6" width="2.6" height="2.6"/></g></svg>
<div class="t val" style="left:498.6px;top:1209.6px;letter-spacing:-.45px">15:00</div>
<div class="ul" style="left:332px;top:1236px;width:232.5px"></div>

<!-- ================= MIDDLE PANEL: AKTIVITÄTEN ================= -->
<div class="panel" style="left:756px;top:307px;width:941px;height:957.5px"></div>
<div class="tabline" style="left:756px;top:362px;width:941px"></div>
<div class="tabul" style="left:756px;top:356px;width:156px"></div>
<div class="t val" style="left:782.5px;top:325.2px;letter-spacing:-1px">AKTIVITÄTEN</div>
<div class="t" style="left:943.3px;top:325.2px;color:#858585;letter-spacing:-.72px">ÄNDERUNGEN</div>

<div class="a" style="left:772px;top:389.5px;width:48px;height:48px;border-radius:50%;background:#2f4799"></div>
<div class="t" style="left:781.6px;top:405px;color:#fff;font-size:15.8px;letter-spacing:-.85px">AML</div>
<div class="a" style="left:832px;top:389px;width:848px;height:49.5px;border-radius:25px;border:1px solid #e1e1e1;background:#fefefe"></div>
<div class="t" style="left:851.3px;top:405.1px;color:#777">Kommentar schreiben...</div>
<div class="t" style="left:783px;top:457.5px;color:#8a8a8a;font-size:19px">@</div>
<svg style="left:823.5px;top:457px" width="17" height="23" viewBox="0 0 17 23"><rect x="1" y="3.6" width="15" height="18.4" rx="1.8" fill="none" stroke="#8a8a8a" stroke-width="1.6"/><path d="M5.4 4.6 V2.2 H7 A1.6 1.6 0 0 1 10 2.2 H11.6 V4.6 Z" fill="#fdfdfd" stroke="#8a8a8a" stroke-width="1.2"/><path d="M4.6 17.6 L5.4 14.6 L11.4 8.6 L13.6 10.8 L7.6 16.8 Z" fill="#8a8a8a"/></svg>
<svg style="left:860.5px;top:461.5px" width="21" height="15" viewBox="0 0 21 15"><rect x="0.3" y="0.3" width="20.4" height="14.4" rx="1.2" fill="#dcdcdc"/><path d="M1 1.4 L10.5 8.4 L20 1.4" fill="none" stroke="#c2c2c2" stroke-width="1.3"/></svg>
<svg style="left:1643px;top:457.5px" width="27" height="23" viewBox="0 0 27 23"><path d="M0.2 0.4 L26 11.2 L0.2 22.4 L0.2 14 L19.5 11.3 L0.2 8.8 Z" fill="#6f6f6f"/></svg>
<div class="a" style="left:760px;top:505px;width:932px;height:1px;background:#e6e6e6"></div>

<div class="a" style="left:781px;top:529.5px;width:890px;height:211.5px;border-radius:8px;background:#efefef"></div>
<svg style="left:1196.5px;top:565px" width="59" height="52" viewBox="0 0 59 52"><path d="M29.5 1.2 C45.5 1.2 58 11.8 58 24.8 C58 37.8 45.5 48.4 29.5 48.4 C25.6 48.4 21.9 47.8 18.5 46.6 C15.5 49 11 50.4 6.4 50.4 C9.2 47.8 10.4 45 10.4 41.6 C4.6 37.4 1 31.4 1 24.8 C1 11.8 13.5 1.2 29.5 1.2 Z" fill="#dcecfb" stroke="#5b95c8" stroke-width="1.5"/></svg>
<div class="t" style="left:1026px;top:639.8px;width:400px;text-align:center;font-weight:700;color:#333;font-size:17.8px">Noch keine Kommentare</div>
<div class="a" style="left:781px;top:668.6px;width:890px;text-align:center;font-size:16.1px;line-height:21.7px;color:#3a3a3a;letter-spacing:0"><span style="letter-spacing:.085px">Schreiben Sie einen Kommentar, um eine Diskussion zu beginnen! Erwähnen Sie einen Mitarbeiter mit </span><span style="color:#1a1a6e;letter-spacing:-1.2px">@KÜRZEL</span>, um<br>Ihn zu benachrichtigen</div>

<div class="t" style="left:1026px;top:785.2px;width:400px;text-align:center;color:#686868;font-size:17.2px">Sie können aber auch...</div>
<div class="a" style="left:980.5px;top:849px;width:222.5px;height:144.5px;border-radius:8px;background:#efefef"></div>
<div class="a" style="left:1249.5px;top:849px;width:221.5px;height:144.5px;border-radius:8px;background:#efefef"></div>
<div class="a" style="left:1001.5px;top:937.5px;width:180.5px;height:35.5px;border-radius:4.5px;background:#2f4799"></div>
<div class="a" style="left:1270.5px;top:937.5px;width:179.5px;height:35.5px;border-radius:4.5px;background:#2f4799"></div>
<div class="t" style="left:1001.5px;top:945.5px;width:180.5px;text-align:center;color:#fff;letter-spacing:.27px">Aktivität erstellen</div>
<div class="t" style="left:1270.5px;top:945.5px;width:179.5px;text-align:center;color:#fff">E-Mail versenden</div>
<!-- clipboard check -->
<svg style="left:1073px;top:869.5px" width="38" height="49" viewBox="0 0 38 49"><rect x="1.6" y="8" width="34.8" height="39.4" rx="3.4" fill="#fdfdfd" stroke="#47606b" stroke-width="3"/><path d="M9.6 12 V7.6 H13.6 A5.4 5.4 0 0 1 24.4 7.6 H28.4 V12 Z" fill="#b0bec5" stroke="#78909c" stroke-width="1.4"/><circle cx="19" cy="6.4" r="2" fill="#fdfdfd"/><path d="M9 29.4 L16 36.6 L30 20.6" fill="none" stroke="#3dae49" stroke-width="5"/></svg>
<!-- mail forward -->
<svg style="left:1338.5px;top:876.5px" width="46" height="36" viewBox="0 0 46 36"><rect x="0.4" y="0.4" width="39" height="26.6" rx="2.4" fill="#cfd8dc"/><path d="M1.6 2.4 L20 16.4 L38.4 2.4" fill="none" stroke="#90a4ae" stroke-width="2"/><path d="M18.4 35.4 V25.4 Q18.4 19.6 24.4 19.6 H31.4 V13.2 L45.4 23.8 L31.4 34.2 V27.8 H26.4 V35.4 Z" fill="#9c27b0"/></svg>
<!-- collapse circle -->
<div class="a" style="left:1640px;top:1170px;width:53px;height:80px;overflow:hidden"><div class="a" style="left:16px;top:9.5px;width:60px;height:60px;border-radius:50%;background:#fff;box-shadow:0 0 9px rgba(0,0,0,.28)"></div></div>
<svg style="left:1673px;top:1201px" width="12" height="18" viewBox="0 0 12 18"><path d="M10 1.6 L2.6 9 L10 16.4" fill="none" stroke="#4a5fa8" stroke-width="2.4"/></svg>

<!-- ================= STATUS PANEL ================= -->
<div class="panel" style="left:1724px;top:307px;width:626.5px;height:120px"></div>
<div class="tabline" style="left:1724px;top:362px;width:626.5px"></div>
<div class="tabul" style="left:1724px;top:356px;width:113px"></div>
<div class="t val" style="left:1750.5px;top:325.6px;letter-spacing:-1.2px">STATUS</div>
<svg style="left:1724px;top:363px" width="627" height="64" viewBox="0 0 627 64"><rect x="0" y="0" width="627" height="64" fill="#f6f6f9"/><path d="M4 2 H179.5 L215.5 32 L179.5 62 H4 Z" fill="#2f4799"/><path d="M208.5 2 H383 L418.5 32 L383 62 H208.5 L244 32 Z" fill="#dfe1ec"/><path d="M410.5 2 H620.5 V62 H410.5 L446 32 Z" fill="#dfe1ec"/></svg>
<div class="t" style="left:1733.5px;top:386.6px;width:200px;text-align:center;color:#fff;font-size:18.6px;letter-spacing:.2px">Offen</div>
<div class="t" style="left:1936.5px;top:372.8px;width:200px;text-align:center;color:#6a6a6a;font-weight:700;font-size:18px">In</div>
<div class="t" style="left:1936.5px;top:400.6px;width:200px;text-align:center;color:#6a6a6a;font-weight:700;font-size:18px">Bearbeitung</div>
<div class="t" style="left:2139.5px;top:386.8px;width:200px;text-align:center;color:#6a6a6a;font-weight:700;font-size:18px">Beendet</div>
<div class="a" style="left:2290px;top:363px;width:54.5px;height:50px;overflow:hidden"><div class="a" style="left:20px;top:-36px;width:72px;height:72px;border-radius:50%;background:#fbfbfd;box-shadow:0 0 8px rgba(0,0,0,.3)"></div></div>
<svg style="left:2325px;top:365px" width="20" height="20" viewBox="0 0 20 20"><path d="M18.8 1.2 L7 13" fill="none" stroke="#5b6fb8" stroke-width="2.6"/><path d="M1.6 18.4 V7.4 L12.6 18.4 Z" fill="#5b6fb8"/></svg>

<!-- ================= ANLIEGENERGEBNIS PANEL ================= -->
<div class="panel" style="left:1724px;top:453px;width:626.5px;height:536.5px"></div>
<div class="tabline" style="left:1724px;top:508px;width:626.5px"></div>
<div class="tabul" style="left:1724px;top:502px;width:214.5px"></div>
<div class="t val" style="left:1750.5px;top:472px;letter-spacing:-1.17px">ANLIEGENERGEBNIS</div>
<div class="t lbl" style="left:1764px;top:534px">Abschlussdatum</div>
<svg style="left:2092px;top:532px" width="19" height="20" viewBox="0 0 19 20"><rect x="1.1" y="3.1" width="16.8" height="15.8" rx="1.8" fill="none" stroke="#2a3f8f" stroke-width="2.2"/><rect x="1.1" y="3.1" width="16.8" height="4.6" fill="#2a3f8f"/><rect x="4.4" y="0.2" width="2.4" height="4.4" fill="#2a3f8f"/><rect x="12.2" y="0.2" width="2.4" height="4.4" fill="#2a3f8f"/><g fill="#2a3f8f"><rect x="4" y="9.6" width="2.6" height="2.6"/><rect x="8.2" y="9.6" width="2.6" height="2.6"/><rect x="12.4" y="9.6" width="2.6" height="2.6"/><rect x="4" y="13.6" width="2.6" height="2.6"/><rect x="8.2" y="13.6" width="2.6" height="2.6"/><rect x="12.4" y="13.6" width="2.6" height="2.6"/></g></svg>
<div class="ul" style="left:1960px;top:559px;width:234px"></div>
<div class="t lbl" style="left:1764px;top:578px">Durchlaufzeit (Tage)</div>
<div class="ul" style="left:1960px;top:603px;width:332.5px"></div>
<div class="t lbl" style="left:1764px;top:642px">Ergebnis</div>
<div class="a" style="left:1760px;top:664px;width:539px;height:300px;border:1px solid #dedede;border-bottom:none;background:#fdfdfd"></div>
<div class="a" style="left:1760px;top:702px;width:539px;height:1px;background:#dedede"></div>
<div class="a" style="left:2263px;top:674px;width:20px;height:19px;background:#e4e4e4;border:1px solid #b9b9b9"></div>
<svg style="left:2269px;top:681.5px" width="8" height="4" viewBox="0 0 8 4"><path d="M0 0 H8 L4 4 Z" fill="#333"/></svg>

<!-- expand chevron -->
<svg style="left:2397px;top:785.5px" width="11" height="17" viewBox="0 0 11 17"><path d="M2 1.6 L8.6 8.5 L2 15.4" fill="none" stroke="#2f4799" stroke-width="2.2"/></svg>

<!-- ================= AKTIONEN PANEL ================= -->
<div class="panel" style="left:2413.5px;top:307px;width:312px;height:971px;background:#fefefe"></div>
<div class="t val" style="left:2437.3px;top:335.8px;font-size:21.2px">Aktionen</div>
<svg style="left:2474px;top:410px" width="19" height="12" viewBox="0 0 19 12"><path d="M1.4 1.4 L9.5 9.4 L17.6 1.4" fill="none" stroke="#34448a" stroke-width="3.2"/></svg>
<svg style="left:2503px;top:405px" width="25" height="20" viewBox="0 0 25 20"><path d="M0.4 2.4 Q0.4 0.6 2.2 0.6 H9 L11.6 3.4 H22.8 Q24.6 3.4 24.6 5.2 V17.6 Q24.6 19.4 22.8 19.4 H2.2 Q0.4 19.4 0.4 17.6 Z" fill="#f7c23f"/><path d="M0.4 6.2 H24.6 V17.6 Q24.6 19.4 22.8 19.4 H2.2 Q0.4 19.4 0.4 17.6 Z" fill="#fdd466"/></svg>
<div class="t val" style="left:2535.8px;top:406.8px;font-size:17.85px">Vorgangsmanagement</div>
<svg style="left:2497px;top:455px" width="22" height="22" viewBox="0 0 22 22"><circle cx="11" cy="11" r="10.7" fill="#2b8fe6"/><path d="M7.8 5.2 L16.8 11 L7.8 16.8 Z" fill="#fff"/></svg>
<div class="t val" style="left:2528.7px;top:457.5px;font-size:17.85px;letter-spacing:.1px">Aktivität anlegen</div>
<svg style="left:2497px;top:505px" width="22" height="22" viewBox="0 0 22 22"><circle cx="11" cy="11" r="10.7" fill="#2b8fe6"/><path d="M7.8 5.2 L16.8 11 L7.8 16.8 Z" fill="#fff"/></svg>
<div class="t val" style="left:2528.7px;top:507.4px;font-size:17.85px;letter-spacing:-.15px">Anliegen abschließen</div>
<svg style="left:2497px;top:555px" width="22" height="22" viewBox="0 0 22 22"><circle cx="11" cy="11" r="10.7" fill="#2b8fe6"/><path d="M7.8 5.2 L16.8 11 L7.8 16.8 Z" fill="#fff"/></svg>
<div class="t val" style="left:2528.7px;top:557.2px;font-size:17.85px;letter-spacing:-.25px">Rückfrage an Kunde</div>
<svg style="left:2497px;top:606px" width="22" height="22" viewBox="0 0 22 22"><circle cx="11" cy="11" r="10.7" fill="#bfddf8"/><path d="M7.8 5.2 L16.8 11 L7.8 16.8 Z" fill="#fff"/></svg>
<div class="t" style="left:2528.7px;top:608.3px;font-size:17.85px;letter-spacing:.08px;color:#a8a8a8">Anliegen wiedereröffnen</div>
<div class="a" style="left:2429px;top:1273px;width:228px;height:3.2px;border-radius:2px;background:#8c8c8c"></div>

<!-- ================= BOTTOM BAR ================= -->
<div class="a" style="left:64px;top:1290px;width:2662px;height:66px;background:#fdfdfd;border-top:1px solid #e2e2e2"></div>
<svg style="left:1369.5px;top:1293.5px" width="15" height="9" viewBox="0 0 15 9"><path d="M1.4 1.4 L7.5 7.4 L13.6 1.4" fill="none" stroke="#9a9a9a" stroke-width="1.8"/></svg>
<svg style="left:1405.5px;top:1293.5px" width="15" height="9" viewBox="0 0 15 9"><path d="M1.4 7.6 L7.5 1.6 L13.6 7.6" fill="none" stroke="#9a9a9a" stroke-width="1.8"/></svg>
<svg style="left:79px;top:1318.5px" width="20" height="25" viewBox="0 0 20 25"><rect x="1" y="4.2" width="18" height="19.8" rx="2" fill="#fdfdfd" stroke="#5a6b75" stroke-width="1.7"/><path d="M5.6 6.2 V3.6 H7.6 A2.4 2.4 0 0 1 12.4 3.6 H14.4 V6.2 Z" fill="#cfd8dc" stroke="#78909c" stroke-width="1"/><path d="M5.2 14.8 L8.6 18.4 L15.2 10.6" fill="none" stroke="#3dae49" stroke-width="2.6"/></svg>
<div class="t val" style="left:110.5px;top:1321.8px;letter-spacing:-.82px">AKTIVITÄTEN (0)</div>
<div class="t" style="left:251px;top:1320.6px;color:#2f4799;font-weight:700;font-size:17.5px">✖</div>
<div class="a" style="left:65px;top:1354.5px;width:216px;height:1.5px;background:#1f2f66"></div>
<svg style="left:298.5px;top:1319px" width="19" height="24" viewBox="0 0 19 24"><path d="M1 1 H12 L18 7 V23 H1 Z" fill="#f3f6fa" stroke="#a4b0ba" stroke-width="1.5"/><path d="M12 1 V7 H18" fill="none" stroke="#a4b0ba" stroke-width="1.3"/></svg>
<div class="t" style="left:330.2px;top:1321.8px;color:#858585;letter-spacing:-.62px">DOKUMENTE (0)</div>
<div class="t" style="left:474px;top:1320.6px;color:#2f4799;font-weight:700;font-size:17.5px">✖</div>
<svg style="left:519px;top:1319px" width="24" height="24" viewBox="0 0 24 24"><g transform="rotate(-45 12 12)"><path d="M2.4 5.6 H21.6 V9.8 A2.2 2.2 0 0 0 21.6 14.2 V18.4 H2.4 V14.2 A2.2 2.2 0 0 0 2.4 9.8 Z" fill="#ffa726"/></g></svg>
<div class="t" style="left:552.5px;top:1321.8px;color:#858585;letter-spacing:-.72px">VORGÄNGE (1)</div>
<div class="t" style="left:685px;top:1320.6px;color:#2f4799;font-weight:700;font-size:17.5px">✖</div>
<svg style="left:739.5px;top:1323px" width="5" height="17" viewBox="0 0 5 17"><circle cx="2.5" cy="2.2" r="1.9" fill="#4a57b5"/><circle cx="2.5" cy="8.5" r="1.9" fill="#4a57b5"/><circle cx="2.5" cy="14.8" r="1.9" fill="#4a57b5"/></svg>
<div class="t" style="left:762.5px;top:1321.8px;color:#6e6e6e;font-size:16.6px;letter-spacing:-.87px">WEITERE BEREICHE</div>
<div class="a" style="left:2680px;top:1308px;width:1px;height:48px;background:#ececec"></div>
<svg style="left:2707.5px;top:1324px" width="11" height="18" viewBox="0 0 11 18"><path d="M9.4 1.6 L2.4 9 L9.4 16.4" fill="none" stroke="#2a3f8f" stroke-width="2.3"/></svg>
</body>
</html>
